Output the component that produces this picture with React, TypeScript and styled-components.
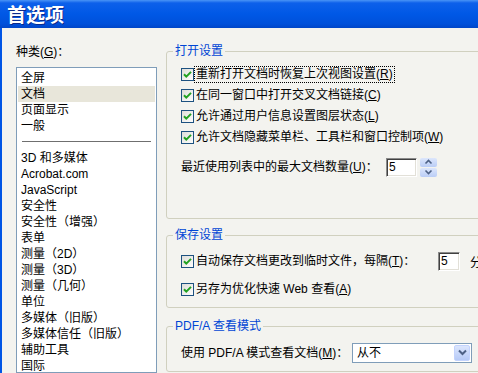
import React from 'react';
import styled, { createGlobalStyle } from 'styled-components';

const Global = createGlobalStyle`
  html, body { margin: 0; padding: 0; overflow: hidden; background: #F3F3EF; }
  body { font-family: "Liberation Sans", "Noto Sans CJK SC", sans-serif; font-size: 12px; color: #000; }
`;

const Window = styled.div`
  width: 478px;
  height: 373px;
  overflow: hidden;
  display: flex;
  flex-direction: column;
  background: #F3F3EF;
`;

const TitleBar = styled.div`
  height: 28px;
  flex: 0 0 28px;
  display: flex;
  align-items: center;
  padding-left: 7px;
  background: linear-gradient(#4A94F6 0px, #0D60EA 3px, #0058E6 14px, #0050DA 24px, #0046C8 28px);
`;

const Title = styled.div`
  font-family: "Noto Sans CJK SC", sans-serif;
  font-weight: bold;
  font-size: 19px;
  line-height: 22px;
  color: #fff;
  text-shadow: 1px 1px 0 #0B2A8C;
`;

const Body = styled.div`
  flex: 1;
  min-height: 0;
  display: flex;
  gap: 9px;
  padding: 15px 0 0 14px;
  border-left: 2px solid #0055E5;
  overflow: hidden;
`;

const LeftCol = styled.div`
  flex: 0 0 141px;
  display: flex;
  flex-direction: column;
`;

const CatLabel = styled.div`
  line-height: 16px;
  margin: 1px 0 7px;
`;

const List = styled.div`
  height: 320px;
  box-sizing: border-box;
  border: 1px solid #7F9DB9;
  background: #fff;
  padding-top: 2px;
  overflow: hidden;
`;

const Item = styled.div<{ $sel?: boolean }>`
  height: 16px;
  line-height: 16px;
  margin: 0 1px;
  padding-left: 3px;
  white-space: nowrap;
  background: ${p => (p.$sel ? '#E8E6DA' : 'transparent')};
`;

const Sep = styled.div`
  height: 16px;
  box-sizing: border-box;
  padding: 7px 5px 0;
  &::before {
    content: '';
    display: block;
    border-top: 1px solid #6F6F6F;
  }
`;

const RightCol = styled.div`
  flex: 0 0 330px;
  display: flex;
  flex-direction: column;
`;

const Group = styled.fieldset<{ $pt: number; $pb: number; $mt: number }>`
  margin: ${p => p.$mt}px 0 0;
  padding: ${p => p.$pt}px 0 ${p => p.$pb}px 14px;
  border: 1px solid #D0D0BF;
  border-radius: 3px;
  min-width: 0;
`;

const Legend = styled.legend`
  padding: 0 2px;
  margin-left: -8px;
  color: #0046D5;
  line-height: 16px;
  font-size: 12px;
`;

const Row = styled.div<{ $h?: number; $mt?: number }>`
  display: flex;
  align-items: center;
  height: ${p => p.$h ?? 21}px;
  margin-top: ${p => p.$mt ?? 0}px;
  white-space: nowrap;
`;

const CLabel = styled.span<{ $focus?: boolean; $w?: number }>`
  line-height: 15px;
  padding: 0 1px;
  border: 1px dotted ${p => (p.$focus ? '#000' : 'transparent')};
  white-space: nowrap;
  ${p => (p.$w ? `width: ${p.$w}px; box-sizing: border-box; flex: none;` : '')}
`;

const FieldLabel = styled.span<{ $w: number }>`
  flex: 0 0 ${p => p.$w}px;
  line-height: 16px;
  white-space: nowrap;
`;

const Mn = styled.span`
  text-decoration: underline;
`;

const EditBox = styled.div<{ $w: number }>`
  width: ${p => p.$w}px;
  height: 19px;
  flex: none;
  box-sizing: border-box;
  background: #fff;
  border-style: solid;
  border-width: 1px;
  border-color: #8A8A8A #FFFFFF #FFFFFF #8A8A8A;
  box-shadow: inset 1px 1px 0 #404040, inset -1px -1px 0 #E2E0D8;
  padding-left: 2px;
  line-height: 16px;
  font-family: "Liberation Sans", sans-serif;
`;

const Spin = styled.div`
  margin-left: 3px;
  width: 17px;
  height: 19px;
  display: flex;
  flex-direction: column;
  gap: 1px;
`;

const SpinHalf = styled.div`
  flex: 1;
  display: flex;
  align-items: center;
  justify-content: center;
  background: linear-gradient(#DCE6FC, #BACDF6);
  border-radius: 2px;
`;

const Unit = styled.span`
  margin-left: 10px;
`;

const Dropdown = styled.div`
  width: 120px;
  height: 20px;
  flex: none;
  box-sizing: border-box;
  border: 1px solid #7F9DB9;
  background: #fff;
  display: flex;
  align-items: center;
  padding-left: 4px;
`;

const DropText = styled.span`
  flex: 1;
  line-height: 16px;
`;

const DropArrow = styled.div`
  width: 16px;
  height: 16px;
  margin-right: 1px;
  box-sizing: border-box;
  border: 1px solid #C3D3FD;
  border-radius: 2px;
  background: linear-gradient(#DCE6FD, #B6CAF7);
  display: flex;
  align-items: center;
  justify-content: center;
`;

const CheckBox = () => (
  <svg width="13" height="13" viewBox="0 0 13 13" style={{ flex: 'none' }}>
    <defs>
      <linearGradient id="cbg" x1="0" y1="0" x2="1" y2="1">
        <stop offset="0" stopColor="#DCDCD7" />
        <stop offset="1" stopColor="#FFFFFF" />
      </linearGradient>
    </defs>
    <rect x="0.5" y="0.5" width="12" height="12" fill="url(#cbg)" stroke="#1C5180" />
    <path d="M3 6.2 L5.3 8.6 L10 3.9" fill="none" stroke="#21A121" strokeWidth="2" />
  </svg>
);

const items: (string | null)[] = [
  '全屏', '文档', '页面显示', '一般', null, '3D 和多媒体', 'Acrobat.com', 'JavaScript',
  '安全性', '安全性（增强）', '表单', '测量（2D）', '测量（3D）', '测量（几何）', '单位',
  '多媒体（旧版）', '多媒体信任（旧版）', '辅助工具', '国际',
];

export default function App() {
  return (
    <>
      <Global />
      <Window>
        <TitleBar>
          <Title>首选项</Title>
        </TitleBar>
        <Body>
          <LeftCol>
            <CatLabel>
              种类(<Mn>G</Mn>)：
            </CatLabel>
            <List>
              {items.map((it, i) =>
                it === null ? <Sep key={i} /> : <Item key={i} $sel={it === '文档'}>{it}</Item>
              )}
            </List>
          </LeftCol>
          <RightCol>
            <Group $pt={5} $pb={41} $mt={0}>
              <Legend>打开设置</Legend>
              <Row>
                <CheckBox />
                <CLabel $focus>重新打开文档时恢复上次视图设置(<Mn>R</Mn>)</CLabel>
              </Row>
              <Row>
                <CheckBox />
                <CLabel>在同一窗口中打开交叉文档链接(<Mn>C</Mn>)</CLabel>
              </Row>
              <Row>
                <CheckBox />
                <CLabel>允许通过用户信息设置图层状态(<Mn>L</Mn>)</CLabel>
              </Row>
              <Row>
                <CheckBox />
                <CLabel>允许文档隐藏菜单栏、工具栏和窗口控制项(<Mn>W</Mn>)</CLabel>
              </Row>
              <Row $h={20} $mt={9}>
                <FieldLabel $w={205}>最近使用列表中的最大文档数量(<Mn>U</Mn>)：</FieldLabel>
                <EditBox $w={31}>5</EditBox>
                <Spin>
                  <SpinHalf>
                    <svg width="9" height="6" viewBox="0 0 9 6">
                      <path d="M1.5 4.5 L4.5 1.5 L7.5 4.5" fill="none" stroke="#4D6185" strokeWidth="1.6" />
                    </svg>
                  </SpinHalf>
                  <SpinHalf>
                    <svg width="9" height="6" viewBox="0 0 9 6">
                      <path d="M1.5 1.5 L4.5 4.5 L7.5 1.5" fill="none" stroke="#4D6185" strokeWidth="1.6" />
                    </svg>
                  </SpinHalf>
                </Spin>
              </Row>
            </Group>
            <Group $pt={8} $pb={7} $mt={8}>
              <Legend>保存设置</Legend>
              <Row>
                <CheckBox />
                <CLabel $w={244}>自动保存文档更改到临时文件，每隔(<Mn>T</Mn>)：</CLabel>
                <EditBox $w={22}>5</EditBox>
                <Unit>分钟</Unit>
              </Row>
              <Row $mt={7}>
                <CheckBox />
                <CLabel>另存为优化快速 Web 查看(<Mn>A</Mn>)</CLabel>
              </Row>
            </Group>
            <Group $pt={8} $pb={8} $mt={10}>
              <Legend>PDF/A 查看模式</Legend>
              <Row>
                <FieldLabel $w={171}>使用 PDF/A 模式查看文档(<Mn>M</Mn>)：</FieldLabel>
                <Dropdown>
                  <DropText>从不</DropText>
                  <DropArrow>
                    <svg width="9" height="7" viewBox="0 0 9 7">
                      <path d="M1 1.5 L4.5 5 L8 1.5" fill="none" stroke="#4D6185" strokeWidth="2" />
                    </svg>
                  </DropArrow>
                </Dropdown>
              </Row>
            </Group>
          </RightCol>
        </Body>
      </Window>
    </>
  );
}
